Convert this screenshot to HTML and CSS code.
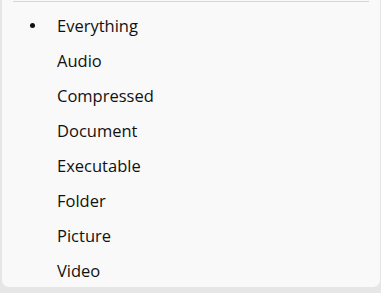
FILE: index.html
```html
<!DOCTYPE html>
<html lang="en">
<head>
  <meta charset="UTF-8" />
  <meta name="viewport" content="width=device-width, initial-scale=1.0" />
  <title>Type filter</title>
  <link rel="stylesheet" href="styles.css">
</head>
<body>
  <div class="menu">
    <div class="separator"></div>
    <ul class="items">
      <li class="item checked"><span class="mark"></span>Everything</li>
      <li class="item"><span class="mark"></span>Audio</li>
      <li class="item"><span class="mark"></span>Compressed</li>
      <li class="item"><span class="mark"></span>Document</li>
      <li class="item"><span class="mark"></span>Executable</li>
      <li class="item"><span class="mark"></span>Folder</li>
      <li class="item"><span class="mark"></span>Picture</li>
      <li class="item"><span class="mark"></span>Video</li>
    </ul>
  </div>
</body>
</html>
```

FILE: styles.css
```css
body {
  margin: 0;
  background: #e6e6e6;
  font-family: "Open Sans", "Noto Sans", sans-serif;
  color: #111111;
}
.menu {
  margin-left: 2px;
  width: 378px;
  height: 287px;
  overflow: hidden;
  background: #f9f9f9;
  border-radius: 0 0 7px 7px;
}
.separator {
  height: 1px;
  margin: 1px 11px 0 11px;
  background: #d6d6d6;
}
.items {
  list-style: none;
  margin: 6px 0 0;
  padding: 0;
}
.item {
  display: flex;
  align-items: center;
  height: 35px;
  font-size: 16.5px;
}
.mark {
  width: 55px;
  display: flex;
  justify-content: center;
}
.checked .mark::before {
  content: "";
  width: 5px;
  height: 5px;
  margin-left: 5px;
  margin-bottom: 0;
  border-radius: 50%;
  background: #111111;
}
```
